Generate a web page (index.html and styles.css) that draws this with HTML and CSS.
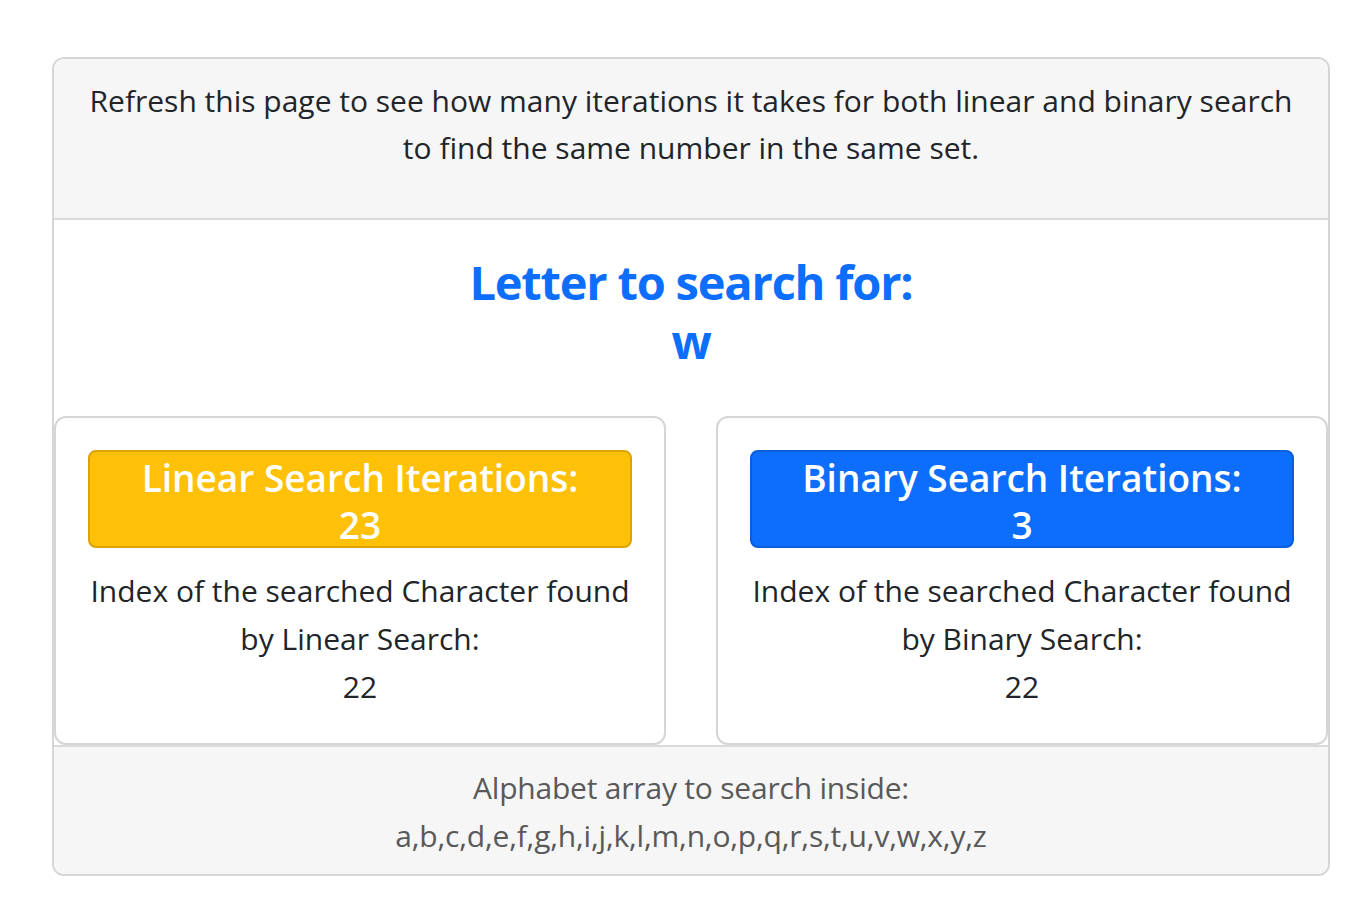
FILE: index.html
```html
<!DOCTYPE html>
<html lang="en">
<head>
<meta charset="utf-8">
<title>Linear vs Binary Search</title>
<link rel="stylesheet" href="styles.css">
</head>
<body>
<div class="page">
  <div class="card">
    <div class="card-header">
      Refresh this page to see how many iterations it takes for both linear and binary search to find the same number in the same set.
    </div>
    <div class="card-body">
      <h1 class="title">Letter to search for:<br>w</h1>
      <div class="row">
        <div class="result">
          <div class="badge badge-warning">Linear Search Iterations:<br>23</div>
          <p class="result-text">Index of the searched Character found by Linear Search:<br>22</p>
        </div>
        <div class="result">
          <div class="badge badge-primary">Binary Search Iterations:<br>3</div>
          <p class="result-text">Index of the searched Character found by Binary Search:<br>22</p>
        </div>
      </div>
    </div>
    <div class="card-footer">
      Alphabet array to search inside:<br>a,b,c,d,e,f,g,h,i,j,k,l,m,n,o,p,q,r,s,t,u,v,w,x,y,z
    </div>
  </div>
</div>
</body>
</html>
```

FILE: styles.css
```css
* { box-sizing: border-box; }
html, body { margin: 0; padding: 0; background: #fff; }
body {
  font-family: "Open Sans", "Noto Sans", sans-serif;
  color: #212529;
  font-size: 30px;
  line-height: 47px;
}
.page {
  padding: 57px 0 0 52px;
}
.card {
  width: 1278px;
  border: 2px solid #d6d6d6;
  border-radius: 12px;
  overflow: hidden;
  text-align: center;
}
.card-header {
  background: #f6f6f6;
  border-bottom: 2px solid #dadada;
  padding: 18px 30px 47px;
  letter-spacing: 0;
}
.card-body {
  padding: 33px 0 0;
}
.title {
  margin: 0;
  color: #0d6efd;
  font-size: 47px;
  line-height: 59px;
  font-weight: 700;
  letter-spacing: -1.2px;
}
.row {
  margin-top: 45px;
  display: grid;
  grid-template-columns: 1fr 1fr;
  column-gap: 50px;
}
.result {
  border: 2px solid #d6d6d6;
  border-radius: 12px;
  padding: 32px;
}
.badge {
  border: 2px solid;
  border-radius: 8px;
  color: #fff;
  font-weight: 600;
  font-size: 37px;
  line-height: 47px;
  padding-top: 2px;
  height: 98px;
  letter-spacing: 0;
}
.badge-warning { background: #ffc107; border-color: #dba404; }
.badge-primary { background: #0d6efd; border-color: #0b5ed7; }
.result-text {
  margin: 19px 0 0;
  line-height: 48px;
  letter-spacing: 0;
}
.card-footer {
  background: #f6f6f6;
  border-top: 2px solid #dadada;
  padding: 17px 30px 14px;
  line-height: 48px;
  color: #595959;
  letter-spacing: -0.2px;
}
```
